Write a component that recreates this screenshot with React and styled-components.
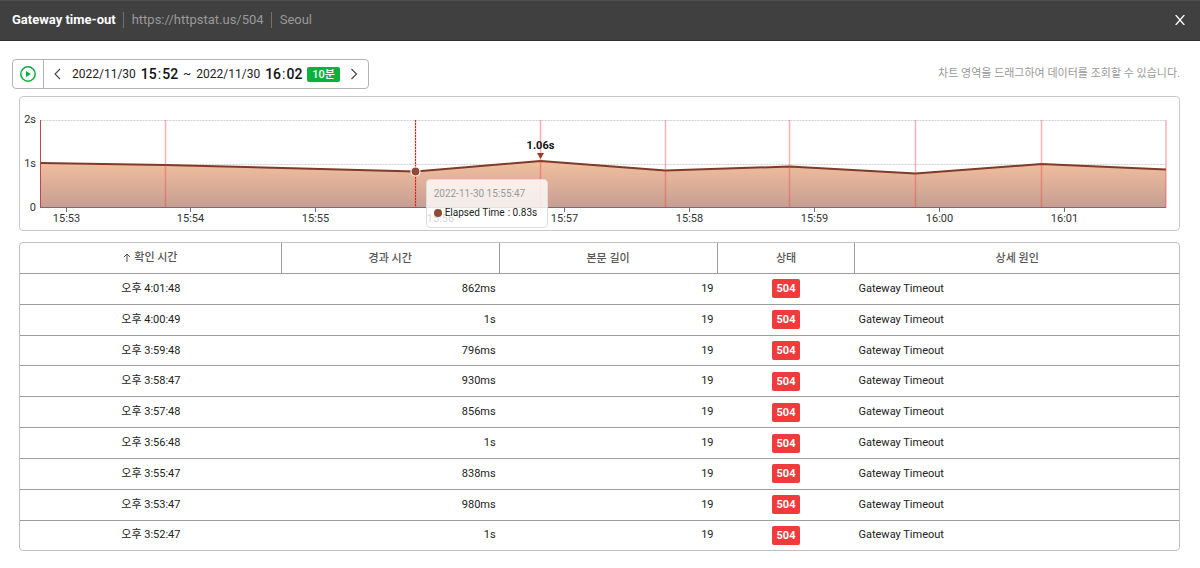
import React from 'react';
import styled, { createGlobalStyle } from 'styled-components';

const GlobalStyle = createGlobalStyle`
  * { box-sizing: border-box; }
  body {
    margin: 0;
    background: #fff;
    color: #222;
    font-family: Roboto, "Noto Sans CJK KR", sans-serif;
    font-size: 11px;
    line-height: 16px;
  }
  button {
    margin: 0;
    padding: 0;
    border: 0;
    background: none;
    color: inherit;
    font: inherit;
    cursor: pointer;
  }
`;

const Header = styled.header`
  display: flex;
  align-items: center;
  height: 41px;
  padding: 0 12px 2px;
  background: #404040;
  border-top: 1px solid #505050;
  border-bottom: 1px solid #303030;
  color: #999;
  font-size: 13px;
`;

const Title = styled.h1`
  margin: 0;
  color: #fff;
  font-size: 13px;
  font-weight: 700;
`;

const Meta = styled.span`
  margin-left: 7px;
  padding-left: 8px;
  border-left: 1px solid #707070;
`;

const TargetLink = styled.a`
  color: inherit;
  text-decoration: none;
`;

const CloseButton = styled.button`
  display: flex;
  margin-left: auto;
  padding: 3px;
  color: #fff;
`;

const Main = styled.main`
  padding: 18px 20px 17px 19px;
`;

const Toolbar = styled.div`
  display: flex;
  align-items: center;
  justify-content: space-between;
  margin: 0 0 7px -7px;
`;

const RangePicker = styled.div`
  display: flex;
  align-items: stretch;
  height: 30px;
  border: 1px solid #b4b4b4;
  border-radius: 4px;
`;

const PlayButton = styled.button`
  display: flex;
  align-items: center;
  justify-content: center;
  width: 31px;
  border-right: 1px solid #b4b4b4;
`;

const StepButton = styled.button`
  display: flex;
  align-items: center;
  justify-content: center;
  width: 28px;
  color: #444;
`;

const Range = styled.div`
  display: flex;
  align-items: center;
  gap: 5px;
  color: #222;
  font-size: 12px;
`;

const Clock = styled.time`
  color: #111;
  font-size: 14px;
  font-weight: 500;
`;

const Colon = styled.span`
  margin: 0 1px;
  font-weight: 400;
`;

const Duration = styled.span`
  padding: 0 5px;
  border-radius: 2px;
  background: #0ab13c;
  color: #fff;
  font-size: 11px;
  font-weight: 500;
  line-height: 15px;
`;

const Hint = styled.p`
  margin: 0;
  color: #999;
`;

const ChartPanel = styled.section`
  position: relative;
  border: 1px solid #c8c8c8;
  border-radius: 4px;
`;

const ChartSvg = styled.svg`
  display: block;
  width: 100%;
  height: auto;
  font-size: 11px;
  fill: #333;
`;

const Tooltip = styled.div`
  position: absolute;
  top: 82px;
  left: 35%;
  padding: 6px 10px 6px 7px;
  border: 1px solid #ddd;
  border-radius: 4px;
  background: rgba(255, 255, 255, 0.8);
  font-size: 10px;
  white-space: nowrap;
`;

const TooltipTime = styled.div`
  color: #999;
`;

const TooltipValue = styled.div`
  display: flex;
  align-items: center;
  gap: 3px;
  margin-top: 3px;
`;

const Dot = styled.span`
  width: 8px;
  height: 8px;
  border-radius: 50%;
  background: #8f4a35;
`;

const TablePanel = styled.section`
  margin-top: 11px;
  border: 1px solid #c0c0c0;
  border-radius: 4px;
`;

const Table = styled.table`
  width: 100%;
  height: 307px;
  table-layout: fixed;
  border-collapse: separate;
  border-spacing: 0;
`;

const HeadCell = styled.th`
  width: ${({ $width }) => $width};
  height: 31px;
  padding: 1px 0 0;
  border-bottom: 1px solid #9c9c9c;
  color: #555;
  font-weight: 500;

  & + & {
    border-left: 1px solid #9c9c9c;
  }
`;

const SortButton = styled.button`
  display: inline-flex;
  align-items: center;
  gap: 3px;
`;

const Row = styled.tr`
  &:not(:last-child) > td {
    border-bottom: 1px solid #9c9c9c;
  }
`;

const Cell = styled.td`
  padding: 0 3px 0 4px;
  text-align: ${({ $align }) => $align || 'left'};
`;

const Status = styled.span`
  display: inline-block;
  padding: 0 5px;
  border-radius: 2px;
  background: #ef3b3b;
  color: #fff;
  font-weight: 700;
  line-height: 19px;
  vertical-align: middle;
`;

const rows = [
  ['4:01:48', '862ms'],
  ['4:00:49', '1s'],
  ['3:59:48', '796ms'],
  ['3:58:47', '930ms'],
  ['3:57:48', '856ms'],
  ['3:56:48', '1s'],
  ['3:55:47', '838ms'],
  ['3:53:47', '980ms'],
  ['3:52:47', '1s'],
];

const PLOT = { left: 20.5, right: 1146, top: 23, bottom: 110.5 };

const points = [
  [20.5, 66], [145.5, 68], [395.5, 74.5], [520.5, 64], [645.5, 73.5],
  [769.5, 69.5], [895.5, 76.5], [1021.5, 67], [1146, 72.5],
];

const ticks = [
  ['15:53', 46.5], ['15:54', 170.5], ['15:55', 295.5], ['15:56', 420.5], ['15:57', 544.5],
  ['15:58', 669.5], ['15:59', 794.5], ['16:00', 919.5], ['16:01', 1044.5],
];

const yLabels = [['2s', 26], ['1s', 70], ['0', 114]];

const HOVERED = 2;
const PEAK = 3;

function ElapsedChart() {
  const line = points.map((p) => p.join(',')).join(' ');
  const area = `${PLOT.left},${PLOT.bottom} ${line} ${PLOT.right},${PLOT.bottom}`;
  const [hx, hy] = points[HOVERED];
  const [px, py] = points[PEAK];
  return (
    <ChartSvg viewBox="0 0 1159 133" role="img" aria-label="Elapsed Time">
      <defs>
        <linearGradient id="areaFill" x1="0" y1="64" x2="0" y2="110" gradientUnits="userSpaceOnUse">
          <stop offset="0" stopColor="#f2bf9f" />
          <stop offset="1" stopColor="#c79e92" />
        </linearGradient>
      </defs>
      {[23.5, 67.5].map((y) => (
        <line key={y} x1={PLOT.left} x2={PLOT.right} y1={y} y2={y} stroke="#d0d0d0" strokeDasharray="2 1" />
      ))}
      <polygon points={area} fill="url(#areaFill)" />
      <line x1="20" x2="1146" y1="110.5" y2="110.5" stroke="#6e7079" />
      {ticks.map(([label, x]) => (
        <g key={label}>
          <line x1={x} x2={x} y1="111" y2="115" stroke="#6e7079" />
          <text x={x} y="125" textAnchor="middle">{label}</text>
        </g>
      ))}
      {yLabels.map(([label, y]) => (
        <text key={label} x="16" y={y} textAnchor="end">{label}</text>
      ))}
      <polyline points={line} fill="none" stroke="#7f3a28" strokeWidth="2" strokeLinejoin="round" />
      {points.map(([x], i) => (
        <line
          key={x}
          x1={x}
          x2={x}
          y1={PLOT.top}
          y2={PLOT.bottom}
          stroke={i === 0 ? '#b83838' : '#f53b3b'}
          strokeOpacity={i === 0 ? 0.9 : 0.4}
          strokeWidth={i === 0 ? 1 : 1.5}
        />
      ))}
      <line x1={hx} x2={hx} y1={PLOT.top} y2={PLOT.bottom} stroke="#d22" strokeDasharray="2 1" />
      <circle cx={hx} cy={hy} r="4.5" fill="#8f4a35" stroke="#fff" strokeWidth="1.2" />
      <path d={`M${px - 3.5} ${py - 8}h7l-3.5 6z`} fill="#a23828" />
      <text x={px} y="52" textAnchor="middle" fontWeight="700" fill="#111">1.06s</text>
    </ChartSvg>
  );
}

function Chevron({ d }) {
  return (
    <svg width="8" height="12" viewBox="0 0 8 12" fill="none" stroke="currentColor" strokeWidth="1.1" aria-hidden="true">
      <path d={d} />
    </svg>
  );
}

export default function App() {
  return (
    <>
      <GlobalStyle />
      <Header>
        <Title>Gateway time-out</Title>
        <Meta><TargetLink href="https://httpstat.us/504">https://httpstat.us/504</TargetLink></Meta>
        <Meta>Seoul</Meta>
        <CloseButton aria-label="닫기">
          <svg width="10" height="10" viewBox="0 0 10 10" stroke="currentColor" strokeWidth="1.3" aria-hidden="true">
            <path d="M.7 0L9.3 10M9.3 0L.7 10" />
          </svg>
        </CloseButton>
      </Header>
      <Main>
        <Toolbar>
          <RangePicker>
            <PlayButton aria-label="재생">
              <svg width="16" height="16" viewBox="0 0 16 16" aria-hidden="true">
                <circle cx="8" cy="8" r="7.2" fill="none" stroke="#0ab13c" strokeWidth="1.5" />
                <path d="M6 5l4.8 3-4.8 3z" fill="#0ab13c" />
              </svg>
            </PlayButton>
            <StepButton aria-label="이전"><Chevron d="M6 1L1 6l5 5" /></StepButton>
            <Range>
              <time>2022/11/30</time>
              <Clock>15<Colon>:</Colon>52</Clock>
              <span>~</span>
              <time>2022/11/30</time>
              <Clock>16<Colon>:</Colon>02</Clock>
              <Duration>10분</Duration>
            </Range>
            <StepButton aria-label="다음"><Chevron d="M1.5 1l5 5-5 5" /></StepButton>
          </RangePicker>
          <Hint>차트 영역을 드래그하여 데이터를 조회할 수 있습니다.</Hint>
        </Toolbar>
        <ChartPanel>
          <ElapsedChart />
          <Tooltip role="tooltip">
            <TooltipTime>2022-11-30 15:55:47</TooltipTime>
            <TooltipValue>
              <Dot />
              <span>Elapsed Time</span>
              <span>: 0.83s</span>
            </TooltipValue>
          </Tooltip>
        </ChartPanel>
        <TablePanel>
          <Table>
            <thead>
              <tr>
                <HeadCell $width="22.5%" aria-sort="ascending">
                  <SortButton>
                    <svg width="8" height="9" viewBox="0 0 8 9" fill="none" stroke="currentColor" aria-hidden="true">
                      <path d="M4 9V1M1 4l3-3 3 3" />
                    </svg>
                    확인 시간
                  </SortButton>
                </HeadCell>
                <HeadCell $width="18.8%">경과 시간</HeadCell>
                <HeadCell $width="18.8%">본문 길이</HeadCell>
                <HeadCell $width="11.9%">상태</HeadCell>
                <HeadCell>상세 원인</HeadCell>
              </tr>
            </thead>
            <tbody>
              {rows.map(([time, elapsed]) => (
                <Row key={time}>
                  <Cell $align="center">오후 {time}</Cell>
                  <Cell $align="right">{elapsed}</Cell>
                  <Cell $align="right">19</Cell>
                  <Cell $align="center"><Status>504</Status></Cell>
                  <Cell>Gateway Timeout</Cell>
                </Row>
              ))}
            </tbody>
          </Table>
        </TablePanel>
      </Main>
    </>
  );
}
